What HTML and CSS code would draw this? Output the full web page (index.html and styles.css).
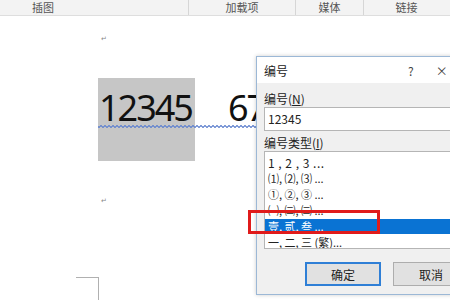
FILE: index.html
```html
<!DOCTYPE html>
<html lang="zh-CN">
<head>
  <meta charset="UTF-8">
  <title>编号</title>
  <link rel="stylesheet" href="styles.css">
</head>
<body>
  <div class="ribbon">
    <div class="group g1">插图</div>
    <div class="group g2">加载项</div>
    <div class="group g3">媒体</div>
    <div class="group g4">链接</div>
  </div>

  <div class="page">
    <div class="para-mark top-mark">↵</div>
    <div class="number-line">
      <span class="selected-num">12345</span>
      <span class="next-num">67</span>
    </div>
    <div class="para-mark bottom-mark">↵</div>
    <div class="corner-mark"></div>

    <!-- dialog window -->
    <div class="dialog">
      <div class="dialog-title">
        <span>编号</span>
        <span class="help">?</span>
        <span class="close">×</span>
      </div>
      <div class="dialog-body">
        <div class="label">编号(<u>N</u>)</div>
        <div class="text-input">12345</div>
        <div class="label">编号类型(<u>I</u>)</div>
        <ul class="list">
          <li class="arabic">1 , 2 , 3 ...</li>
          <li>⑴, ⑵, ⑶ ...</li>
          <li>①, ②, ③ ...</li>
          <li>㈠, ㈡, ㈢ ...</li>
          <li class="active">壹, 贰, 叁 ...</li>
          <li>一, 二, 三 (繁)...</li>
        </ul>
        <div class="buttons">
          <button class="btn default">确定</button>
          <button class="btn">取消</button>
        </div>
      </div>
    </div>

    <div class="highlight-box"></div>
  </div>
</body>
</html>
```

FILE: styles.css
```css
body {
  margin: 0;
  width: 450px;
  height: 300px;
  overflow: hidden;
  background: #fff;
  font-family: "Noto Sans CJK SC", "Noto Sans", sans-serif;
}

/* ribbon group labels */
.ribbon {
  display: flex;
  height: 15px;
  background: #f3f3f3;
  border-bottom: 1px solid #dedede;
  font-size: 11px;
  line-height: 15px;
  color: #555;
}

.group {
  flex: none;
  border-right: 1px solid #d6d6d6;
  text-align: center;
}

.g1 { width: 189px; text-align: left; padding-left: 32px; box-sizing: border-box; }
.g2 { width: 106px; }
.g3 { width: 67px; }
.g4 { width: 85px; border-right: none; }

/* document */
.page {
  position: relative;
  height: 284px;
}

.para-mark {
  font-size: 7px;
  color: #888;
  padding-left: 101px;
  line-height: 8px;
}

.top-mark { padding-top: 18px; }

.number-line {
  position: relative;
  display: flex;
  margin-top: 36px;
  padding-left: 98px;
  height: 83px;
  font-family: "Noto Sans", sans-serif;
  font-size: 36px;
  letter-spacing: -2px;
  color: #111;
}

/* spelling squiggle under the numbers */
.number-line::after {
  content: "";
  position: absolute;
  left: 98px;
  top: 47px;
  width: 160px;
  height: 3px;
  background:
    linear-gradient(135deg, transparent 35%, #6183cf 35%, #6183cf 65%, transparent 65%) 0 0 / 4px 3px repeat-x,
    linear-gradient(45deg, transparent 35%, #6183cf 35%, #6183cf 65%, transparent 65%) 2px 0 / 4px 3px repeat-x;
  opacity: 0.8;
}

.selected-num {
  width: 96px;
  padding-left: 1px;
  padding-top: 10px;
  background: #c6c6c6;
  line-height: 40px;
}

.next-num {
  margin-left: 33px;
  padding-top: 10px;
  line-height: 40px;
}

.bottom-mark { padding-top: 35px; }

.corner-mark {
  width: 22px;
  height: 30px;
  margin: 73px 0 0 76px;
  border-top: 1px solid #b0b0b0;
  border-right: 1px solid #b0b0b0;
}

/* dialog */
.dialog {
  position: absolute;
  left: 256px;
  top: 40px;
  width: 210px;
  height: 237px;
  border: 1px solid #9cb8d6;
  box-shadow: 0 0 4px rgba(0, 0, 0, 0.2);
  background: #f0f0f0;
  font-size: 12px;
  color: #222;
}

.dialog-title {
  display: flex;
  align-items: center;
  height: 26px;
  padding-left: 7px;
  background: #fff;
}

.help {
  margin-left: 120px;
  color: #444;
}

.close {
  margin-left: 22px;
  color: #444;
}

.dialog-body {
  padding: 8px 0 0 7px;
}

.label {
  line-height: 16px;
}

.label u {
  text-decoration: underline;
}

.text-input {
  height: 22px;
  margin: 0 0 4px;
  padding-left: 3px;
  border: 1px solid #b5b5b5;
  background: #fff;
  line-height: 22px;
}

.list {
  list-style: none;
  margin: 0;
  padding: 3px 0 0;
  height: 93px;
  overflow: hidden;
  border: 1px solid #b5b5b5;
  background: #fff;
  font-size: 11px;
}

.list li {
  height: 15px;
  line-height: 15px;
  padding-left: 3px;
  margin-bottom: 1px;
}

.list .arabic {
  font-size: 12px;
  letter-spacing: 0.5px;
}

.list .active {
  background: #0a73d3;
  color: #fff;
}

.buttons {
  display: flex;
  gap: 12px;
  padding: 13px 0 0 41px;
}

.btn {
  flex: none;
  width: 76px;
  height: 24px;
  border: 1px solid #adadad;
  background: #e1e1e1;
  font-family: inherit;
  font-size: 12px;
  color: #222;
}

.btn.default {
  border: 2px solid #2f7fd6;
}

/* red annotation box */
.highlight-box {
  position: absolute;
  left: 248px;
  top: 194px;
  width: 126px;
  height: 18px;
  border: 3px solid #e01b1b;
}
```
